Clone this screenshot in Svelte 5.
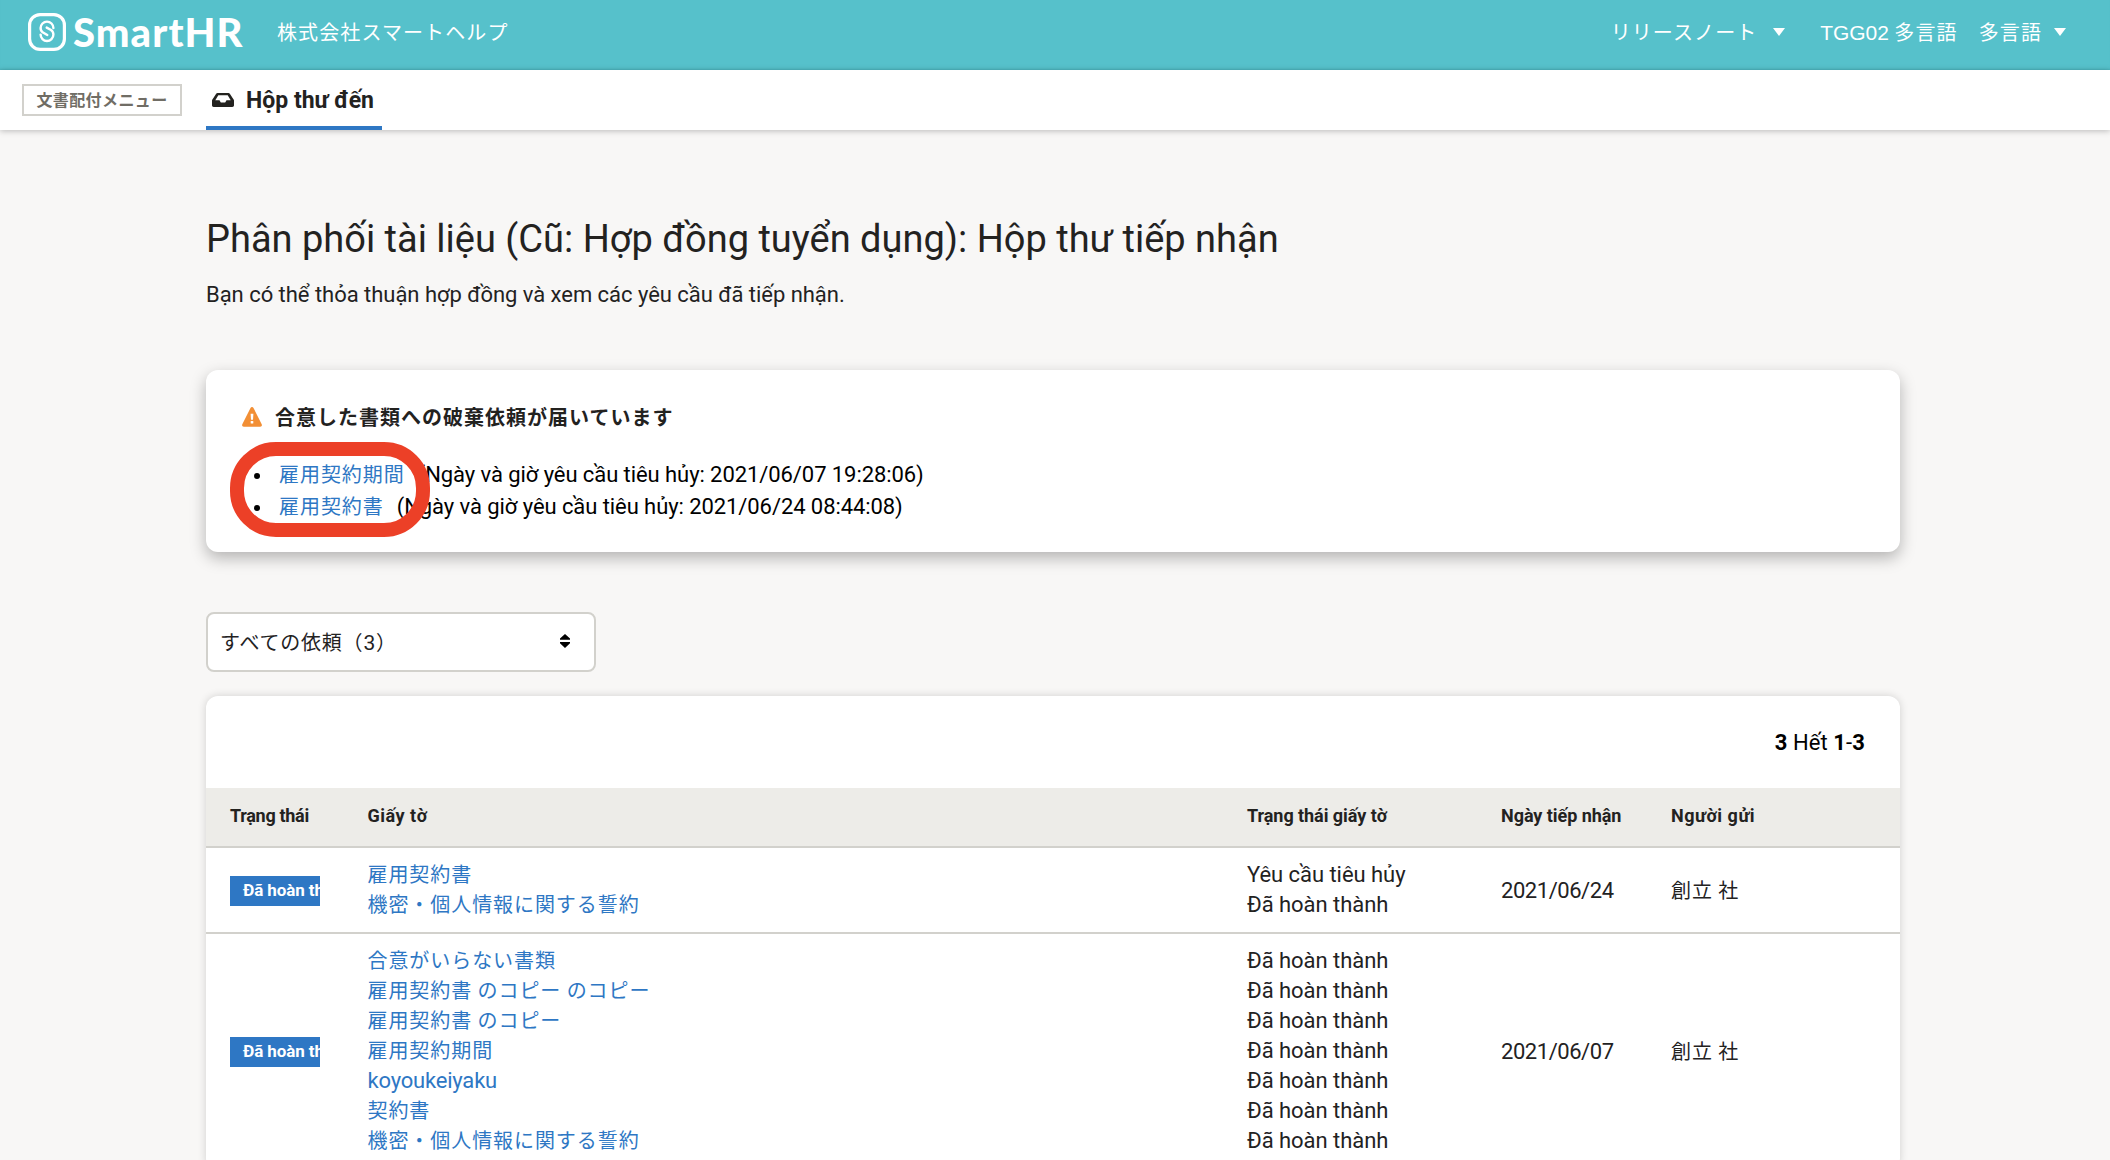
<script>
  const discardRequests = [
    { name: '雇用契約期間', at: '2021/06/07 19:28:06' },
    { name: '雇用契約書', at: '2021/06/24 08:44:08' },
  ];

  const done = 'Đã hoàn thành';
  const rows = [
    {
      docs: [
        ['雇用契約書', 'Yêu cầu tiêu hủy'],
        ['機密・個人情報に関する誓約', done],
      ],
      date: '2021/06/24',
      sender: '創立 社',
    },
    {
      docs: [
        ['合意がいらない書類', done],
        ['雇用契約書 のコピー のコピー', done],
        ['雇用契約書 のコピー', done],
        ['雇用契約期間', done],
        ['koyoukeiyaku', done],
        ['契約書', done],
        ['機密・個人情報に関する誓約', done],
      ],
      date: '2021/06/07',
      sender: '創立 社',
    },
  ];
</script>

<div class="page">
  <header>
    <svg class="mark" viewBox="0 0 38 38" fill="none" stroke="#fff">
      <rect x="1.6" y="1.6" width="34.8" height="34.8" rx="10.5" stroke-width="3.2" />
      <path
        d="M25.400 15A6.400 6.400 0 0 0 12.600 15C12.600 17 13.500 18.600 15 19.600L19.300 22M12.600 21.600A6.400 6.400 0 0 0 25.400 21.600C25.400 19.600 24.500 18 23 17L18.700 14.600"
        stroke-width="2.4"
        stroke-linecap="round"
      />
    </svg>
    <span class="brand">SmartHR</span>
    <span class="company">株式会社スマートヘルプ</span>
    <span class="release">リリースノート</span>
    <i class="caret small"></i>
    <span class="account"><span class="latin">TGG02</span> 多言語　多言語</span>
    <i class="caret"></i>
  </header>

  <nav>
    <span class="menu-label">文書配付メニュー</span>
    <a class="tab" href="#inbox">
      <svg viewBox="0 0 22 14">
        <path
          fill="#23221f"
          fill-rule="evenodd"
          d="M5.600 0h10.800c.7 0 1.200.3 1.600.9l3.600 5.600c.3.400.4.800.4 1.200v4.600c0 1-.7 1.700-1.700 1.700H1.700C.7 14 0 13.300 0 12.300V7.700c0-.4.1-.8.4-1.200L4 .9C4.400.3 4.900 0 5.600 0Zm.7 2.200L3.300 7.300h4.200l1.300 2.300h4.400l1.300-2.300h4.200l-3-5.100Z"
        />
      </svg>
      <span>Hộp thư đến</span>
    </a>
  </nav>

  <main>
    <h1>Phân phối tài liệu (Cũ: Hợp đồng tuyển dụng): Hộp thư tiếp nhận</h1>
    <p class="lead">Bạn có thể thỏa thuận hợp đồng và xem các yêu cầu đã tiếp nhận.</p>

    <section class="notice">
      <h2>
        <svg viewBox="0 0 20 20">
          <path fill="#f28f35" d="M8.500.9a1.700 1.700 0 0 1 3 0l8.200 16.300c.6 1.200-.1 2.500-1.500 2.500H1.800C.4 19.700-.3 18.400.3 17.200Z" />
          <path fill="#fff" d="M8.600 6.700h2.800l-.4 6H9Z" />
          <rect x="8.700" y="14" width="2.600" height="2.600" rx=".6" fill="#fff" />
        </svg>
        合意した書類への破棄依頼が届いています
      </h2>
      <ul>
        {#each discardRequests as r}
          <li><a href="#doc">{r.name}</a><span class="when">(Ngày và giờ yêu cầu tiêu hủy: {r.at})</span></li>
        {/each}
      </ul>
      <div class="ring"></div>
    </section>

    <div class="select">
      <span>すべての依頼（<b>3</b>）</span>
      <svg viewBox="0 0 10 14"><path d="M5 0l5 4.600v1.200H0V4.600ZM0 8h10v1.200L5 14 0 9.200Z" /></svg>
    </div>

    <section class="list">
      <div class="pager"><b>3</b> Hết <b>1</b>-<b>3</b></div>
      <div class="row head">
        <span class="tight">Trạng thái</span>
        <span class="loose">Giấy tờ</span>
        <span>Trạng thái giấy tờ</span>
        <span>Ngày tiếp nhận</span>
        <span class="loose">Người gửi</span>
      </div>
      {#each rows as r}
        <div class="row">
          <div class="badge">Đã hoàn thành</div>
          <div class="stack">
            {#each r.docs as [name]}<a class:alpha={name === 'koyoukeiyaku'} href="#doc">{name}</a>{/each}
          </div>
          <div class="stack">
            {#each r.docs as [, state]}<span>{state}</span>{/each}
          </div>
          <div class="date">{r.date}</div>
          <div class="sender">{r.sender}</div>
        </div>
      {/each}
    </section>
  </main>
</div>

<style>
  :global(body) {
    margin: 0;
    background: #f8f7f6;
  }
  .page {
    height: 1160px;
    overflow: hidden;
    background: #f8f7f6;
    color: #23221f;
    font-family: Roboto, 'Noto Sans CJK JP', sans-serif;
    font-size: 22px;
  }
  a {
    color: #2e77c4;
    text-decoration: none;
  }
  header {
    display: flex;
    align-items: center;
    height: 70px;
    box-sizing: border-box;
    padding: 0 44px 6px 28px;
    background: #56c1cb;
    color: #fff;
    box-shadow: inset 0 -2px 2px -1px #4cb3bd;
    font: 400 20px/30px 'Noto Sans CJK JP', sans-serif;
    letter-spacing: 1.100px;
    white-space: nowrap;
  }
  .mark {
    width: 38px;
    height: 38px;
  }
  .brand {
    width: 204px;
    margin-left: 7px;
    font: 900 40px/40px Lato, sans-serif;
    letter-spacing: 1.100px;
  }
  .release {
    margin-left: auto;
  }
  .latin {
    font: 400 21px 'Liberation Sans', sans-serif;
    letter-spacing: -0.1px;
  }
  .account {
    margin-left: 35px;
  }
  .caret {
    margin-left: 12px;
    border: 6.500px solid transparent;
    border-top: 8px solid #fff;
    border-bottom: 0;
  }
  .caret.small {
    margin-left: 16px;
    border-left-width: 6px;
    border-right-width: 6px;
  }
  nav {
    position: relative;
    display: flex;
    align-items: center;
    height: 60px;
    padding-left: 22px;
    background: #fff;
    box-shadow: 0 1px 6px rgba(3, 3, 2, 0.25);
  }
  .menu-label {
    width: 160px;
    height: 32px;
    box-sizing: border-box;
    border: 2px solid #d2d1cc;
    color: #706d65;
    font: 700 16px/27px 'Noto Sans CJK JP', sans-serif;
    letter-spacing: 0.4px;
    text-align: center;
  }
  .tab {
    display: flex;
    align-items: center;
    gap: 12px;
    width: 176px;
    height: 60px;
    box-sizing: border-box;
    margin-left: 24px;
    padding-left: 6px;
    border-bottom: 4px solid #2e77c4;
    color: #23221f;
    font-size: 23px;
    font-weight: 700;
    white-space: nowrap;
  }
  .tab span {
    padding-top: 4px;
  }
  .tab svg {
    width: 22px;
    height: 14px;
    padding-top: 3px;
  }
  main {
    width: 1694px;
    padding: 85px 0 0 206px;
  }
  h1 {
    margin: 0;
    font-size: 38px;
    font-weight: 400;
    line-height: 48px;
  }
  .lead {
    margin: 17px 0 0;
    line-height: 30px;
    letter-spacing: -0.03px;
  }
  .notice {
    position: relative;
    height: 182px;
    box-sizing: border-box;
    margin-top: 60px;
    padding: 31px 36px;
    border-radius: 12px;
    background: #fff;
    box-shadow: 0 6px 16px rgba(3, 3, 2, 0.28);
  }
  h2 {
    display: flex;
    align-items: center;
    gap: 13px;
    margin: 0;
    font: 700 20px/32px 'Noto Sans CJK JP', sans-serif;
    letter-spacing: 1px;
  }
  h2 svg {
    width: 20px;
    height: 20px;
  }
  ul {
    margin: 25px 0 0;
    padding: 0 0 0 9px;
    list-style: none;
    color: #000;
  }
  li {
    display: flex;
    align-items: center;
    height: 32px;
    letter-spacing: -0.075px;
  }
  li::before {
    content: '';
    width: 6px;
    height: 6px;
    margin: 3px 19px 0 3px;
    border-radius: 50%;
    background: #000;
  }
  li a {
    font: 400 20px/32px 'Noto Sans CJK JP', sans-serif;
    letter-spacing: 0.95px;
  }
  .when {
    margin-left: 13px;
  }
  .ring {
    position: absolute;
    left: 24px;
    top: 72px;
    width: 200px;
    height: 95px;
    box-sizing: border-box;
    border: 14px solid #ec4027;
    border-radius: 46px;
  }
  .select {
    display: flex;
    align-items: center;
    justify-content: space-between;
    width: 390px;
    height: 60px;
    box-sizing: border-box;
    margin-top: 60px;
    padding: 0 24px 0 12px;
    border: 2px solid #d2d1cc;
    border-radius: 8px;
    background: #fff;
    font: 400 20px/30px 'Noto Sans CJK JP', sans-serif;
    letter-spacing: 0.8px;
  }
  .select b {
    font: 400 21px Roboto, sans-serif;
  }
  .select svg {
    width: 10px;
    height: 14px;
    margin-bottom: 2px;
  }
  .list {
    margin-top: 24px;
    border-radius: 12px;
    background: #fff;
    box-shadow: 0 0 8px rgba(3, 3, 2, 0.16);
  }
  .pager {
    height: 92px;
    box-sizing: border-box;
    padding: 1px 35px 0 0;
    color: #000;
    line-height: 92px;
    letter-spacing: 0.1px;
    text-align: right;
  }
  .row {
    display: grid;
    grid-template-columns: 137.500px 879.500px 254px 170px 1fr;
    align-items: center;
    padding: 12px 0 12px 24px;
    border-bottom: 2px solid #d2d1cc;
    line-height: 30px;
  }
  .row.head {
    height: 56px;
    padding-top: 0;
    padding-bottom: 2px;
    background: #edece8;
    font-size: 18px;
    font-weight: 700;
    letter-spacing: -0.05px;
  }
  .tight {
    letter-spacing: -0.3px;
  }
  .loose {
    letter-spacing: 0.5px;
  }
  .badge {
    width: 90px;
    height: 30px;
    box-sizing: border-box;
    margin-top: 2px;
    padding-left: 13px;
    overflow: hidden;
    background: #2e77c4;
    color: #fff;
    font-size: 17px;
    font-weight: 700;
    line-height: 28px;
    letter-spacing: -0.1px;
    white-space: nowrap;
  }
  .stack {
    display: flex;
    flex-direction: column;
    letter-spacing: -0.05px;
  }
  .stack a {
    height: 30px;
    font: 400 20px/27px 'Noto Sans CJK JP', sans-serif;
    letter-spacing: 0.93px;
  }
  .stack a.alpha {
    font: 400 22px/30px Roboto, sans-serif;
    letter-spacing: -0.2px;
  }
  .date {
    padding-top: 1px;
    letter-spacing: -0.45px;
  }
  .sender {
    font: 400 20px/30px 'Noto Sans CJK JP', sans-serif;
    letter-spacing: 0.9px;
  }
</style>
